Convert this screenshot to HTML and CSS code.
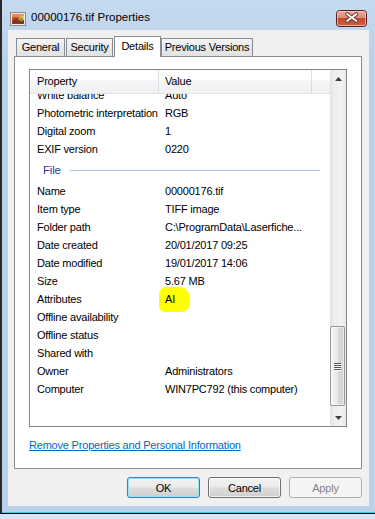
FILE: index.html
```html
<!DOCTYPE html>
<html>
<head>
<meta charset="utf-8">
<title>00000176.tif Properties</title>
<link rel="stylesheet" href="styles.css">
</head>
<body>
<div class="window">
  <div class="titlebar">
    <svg class="app-icon" width="16" height="14" viewBox="0 0 16 14">
      <rect x="0.5" y="0.5" width="15" height="13" fill="#ececec" stroke="#8a8a8a"/>
      <rect x="2" y="2" width="12" height="10" fill="#c9532c"/>
      <rect x="2" y="2" width="12" height="3" fill="#e58a5a"/>
      <path d="M2 9 L6 6 L9 9 L14 7 L14 12 L2 12 Z" fill="#7c3a1c"/>
      <path d="M9 6 L12 3 L14 4 L14 8 L11 9 Z" fill="#d9cf52"/>
      <path d="M10 7 L12 5 L13 9 Z" fill="#6f7b2a"/>
    </svg>
    <span class="title">00000176.tif Properties</span>
    <div class="close">
      <svg width="31" height="17" viewBox="0 0 31 17">
        <defs>
          <linearGradient id="cg" x1="0" y1="0" x2="0" y2="1">
            <stop offset="0" stop-color="#eab1a3"/>
            <stop offset="0.45" stop-color="#d98a76"/>
            <stop offset="0.5" stop-color="#c3482f"/>
            <stop offset="1" stop-color="#cf6247"/>
          </linearGradient>
        </defs>
        <rect x="0.5" y="0.5" width="30" height="16" rx="3" fill="url(#cg)" stroke="#5b1f1b"/>
        <rect x="1.5" y="1.5" width="28" height="14" rx="2" fill="none" stroke="#f4cfc5" stroke-opacity="0.7"/>
        <path d="M11 4 L20.5 11 M20.5 4 L11 11" stroke="#5a2a26" stroke-width="3.6" stroke-linecap="round"/>
        <path d="M11 4 L20.5 11 M20.5 4 L11 11" stroke="#ffffff" stroke-width="2" stroke-linecap="round"/>
      </svg>
    </div>
  </div>

  <div class="client">
    <div class="tabs">
      <div class="tab tab-general">General</div>
      <div class="tab tab-security">Security</div>
      <div class="tab tab-details active">Details</div>
      <div class="tab tab-prev">Previous Versions</div>
    </div>

    <div class="panel">
      <div class="listbox">
        <div class="list-main">
          <div class="header">
            <div class="hc hc-prop">Property</div>
            <div class="hc hc-val">Value</div>
            <div class="hc hc-rest"></div>
          </div>
          <div class="viewport">
            <div class="rows">
              <div class="row"><span class="p">White balance</span><span class="v">Auto</span></div>
              <div class="row"><span class="p">Photometric interpretation</span><span class="v">RGB</span></div>
              <div class="row"><span class="p">Digital zoom</span><span class="v">1</span></div>
              <div class="row"><span class="p">EXIF version</span><span class="v">0220</span></div>
              <div class="group"><span class="group-name">File</span></div>
              <div class="row"><span class="p">Name</span><span class="v">00000176.tif</span></div>
              <div class="row"><span class="p">Item type</span><span class="v">TIFF image</span></div>
              <div class="row"><span class="p">Folder path</span><span class="v">C:\ProgramData\Laserfiche...</span></div>
              <div class="row"><span class="p">Date created</span><span class="v">20/01/2017 09:25</span></div>
              <div class="row"><span class="p">Date modified</span><span class="v">19/01/2017 14:06</span></div>
              <div class="row"><span class="p">Size</span><span class="v">5.67 MB</span></div>
              <div class="row"><span class="p">Attributes</span><span class="v"><span class="hl">AI</span></span></div>
              <div class="row"><span class="p">Offline availability</span><span class="v"></span></div>
              <div class="row"><span class="p">Offline status</span><span class="v"></span></div>
              <div class="row"><span class="p">Shared with</span><span class="v"></span></div>
              <div class="row"><span class="p">Owner</span><span class="v">Administrators</span></div>
              <div class="row"><span class="p">Computer</span><span class="v">WIN7PC792 (this computer)</span></div>
            </div>
          </div>
        </div>
        <div class="scrollbar">
          <div class="sb-btn">
            <svg width="7" height="4" viewBox="0 0 7 4"><path d="M3.5 0 L7 4 L0 4 Z" fill="#3e3e3e"/></svg>
          </div>
          <div class="sb-track">
            <div class="thumb">
              <div class="grip"><i></i><i></i><i></i><i></i></div>
            </div>
          </div>
          <div class="sb-btn">
            <svg width="7" height="4" viewBox="0 0 7 4"><path d="M0 0 L7 0 L3.5 4 Z" fill="#3e3e3e"/></svg>
          </div>
        </div>
      </div>
      <a class="link" href="#">Remove Properties and Personal Information</a>
    </div>

    <div class="buttons">
      <button class="btn default">OK</button>
      <button class="btn">Cancel</button>
      <button class="btn disabled">Apply</button>
    </div>
  </div>
</div>
</body>
</html>
```

FILE: styles.css
```css
* { box-sizing: border-box; }

html, body {
  margin: 0;
  padding: 0;
}

body {
  width: 375px;
  height: 519px;
  overflow: hidden;
  background: #d7e5f4;
  font-family: "Liberation Sans", Arial, sans-serif;
  font-size: 11px;
  letter-spacing: -0.2px;
  color: #000;
}

.window {
  width: 377px;
  height: 514px;
  display: flex;
  flex-direction: column;
  background: linear-gradient(#c6daef, #bad1ea 60px);
  border-left: 2px solid #2a2a2a;
  border-bottom: 1px solid #000;
  box-shadow: inset 0 -1px 0 #4cc8ee;
  padding-bottom: 7px;
}

/* Title bar */
.titlebar {
  height: 30px;
  flex: none;
  display: flex;
  align-items: flex-start;
  padding: 10px 10px 0 8px;
}

.app-icon {
  margin-top: 2px;
  flex: none;
}

.title {
  margin-left: 5px;
  font-size: 11.5px;
  letter-spacing: 0;
  line-height: 15px;
}

.close {
  margin-left: auto;
  width: 31px;
  height: 17px;
}

.close svg { display: block; }

/* Client area */
.client {
  height: 476px;
  flex: none;
  margin: 0 8px 0 6px;
  background: #f0f0f0;
  padding: 6px 7px 0 6px;
  display: flex;
  flex-direction: column;
}

.tabs {
  height: 20px;
  flex: none;
  display: flex;
  align-items: flex-end;
  padding-left: 2px;
  position: relative;
  z-index: 1;
}

.tab {
  height: 18px;
  border: 1px solid #898c95;
  border-bottom: none;
  background: linear-gradient(#f5f5f5, #e9e9e9 50%, #e2e2e2);
  line-height: 16px;
  text-align: center;
  white-space: nowrap;
}

.tab-general { width: 49px; margin-right: 1px; }
.tab-security { width: 47px; margin-right: 1px; }
.tab-details { width: 47px; }
.tab-prev { width: 92px; }

.tab.active {
  height: 21px;
  line-height: 18px;
  background: #fff;
  margin-bottom: -1px;
}

.panel {
  height: 413px;
  flex: none;
  border: 1px solid #898c95;
  background: #fff;
  padding: 12px 14px 0 14px;
  display: flex;
  flex-direction: column;
}

.listbox {
  height: 358px;
  flex: none;
  border: 1px solid #828790;
  display: flex;
}

.list-main {
  flex: 1;
  min-width: 0;
  display: flex;
  flex-direction: column;
}

.header {
  height: 24px;
  flex: none;
  display: flex;
  background: linear-gradient(#ffffff 0%, #ffffff 45%, #f4f5f7 46%, #eff1f3 100%);
  border-bottom: 1px solid #e3e5e8;
}

.hc {
  line-height: 23px;
  white-space: nowrap;
}

.hc-prop {
  width: 129px;
  padding-left: 7px;
  border-right: 1px solid #dcdee2;
}

.hc-val {
  width: 153px;
  padding-left: 6px;
  border-right: 1px solid #dcdee2;
}

.hc-rest { flex: 1; }

.viewport {
  flex: 1;
  overflow: hidden;
}

.rows {
  margin-top: -8px;
}

.row {
  height: 18px;
  line-height: 18px;
  display: flex;
  white-space: nowrap;
}

.p {
  width: 129px;
  flex: none;
  padding-left: 7px;
}

.v {
  padding-left: 6px;
}

.hl {
  display: inline-block;
  background: #ffff00;
  padding: 3px 15px 4px 6px;
  margin: -3px 0 -4px -6px;
  line-height: 18px;
  border-radius: 7px 11px 9px 6px;
}

.group {
  height: 24px;
  display: flex;
  align-items: center;
  padding-left: 13px;
  color: #1e3ab0;
  font-size: 11.5px;
}

.group::after {
  content: "";
  flex: 1;
  height: 1px;
  background: #a9c3e2;
  margin: 0 10px 0 9px;
}

/* Scrollbar */
.scrollbar {
  width: 16px;
  flex: none;
  display: flex;
  flex-direction: column;
  background: linear-gradient(to right, #e2e2e2, #eeeeee 25%, #f2f2f2 75%, #e8e8e8);
}

.sb-btn {
  height: 17px;
  flex: none;
  display: flex;
  align-items: center;
  justify-content: center;
}

.sb-btn svg { display: block; }

.sb-track {
  flex: 1;
}

.thumb {
  height: 80px;
  margin: 239px 1px 0 0;
  border: 1px solid #979797;
  border-radius: 2px;
  background: linear-gradient(to right, #f5f5f5, #e8e8e8 50%, #dadada 51%, #d3d3d3);
  box-shadow: inset 0 0 0 1px rgba(255, 255, 255, 0.6);
  display: flex;
  align-items: center;
  justify-content: center;
}

.grip {
  display: flex;
  flex-direction: column;
  gap: 1px;
}

.grip i {
  display: block;
  width: 7px;
  height: 1px;
  background: #555;
  box-shadow: 0 1px 0 #fafafa;
}

.link {
  align-self: flex-start;
  margin-top: 11px;
  line-height: 14px;
  color: #0066cc;
  text-decoration: underline;
}

/* Buttons */
.buttons {
  display: flex;
  justify-content: flex-end;
  gap: 8px;
  margin-top: 8px;
}

.btn {
  width: 73px;
  height: 21px;
  padding: 0;
  border: 1px solid #707070;
  border-radius: 3px;
  background: linear-gradient(#f2f2f2 0%, #ebebeb 48%, #dddddd 52%, #cfcfcf 100%);
  font-family: inherit;
  font-size: 11px;
  letter-spacing: inherit;
  color: #000;
  box-shadow: inset 0 0 0 1px rgba(255, 255, 255, 0.7);
}

.btn.default {
  border-color: #3c7fb1;
  box-shadow: inset 0 0 0 1px #97e1fb;
}

.btn.disabled {
  border-color: #adb2b5;
  background: #f4f4f4;
  color: #838383;
  box-shadow: none;
}
```
